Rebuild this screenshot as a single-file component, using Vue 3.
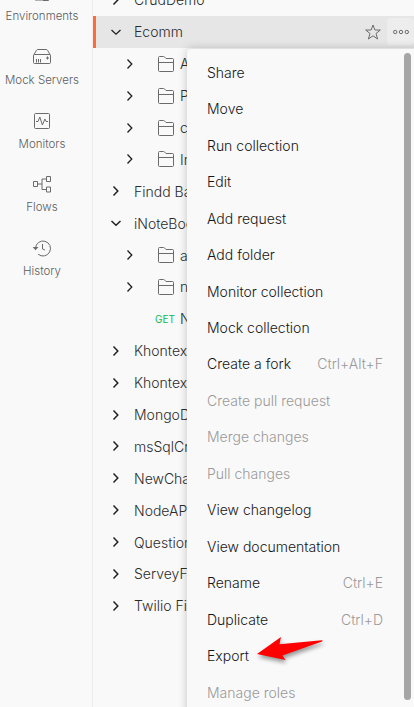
<script setup>
const nav = [
  { label: 'Environments', icon: 'env' },
  { label: 'Mock Servers', icon: 'mock' },
  { label: 'Monitors', icon: 'monitor' },
  { label: 'Flows', icon: 'flow' },
  { label: 'History', icon: 'history' },
]

const tree = [
  { label: 'CrudDemo' },
  { label: 'Ecomm', open: true, active: true },
  { label: 'A', folder: true },
  { label: 'P', folder: true },
  { label: 'c', folder: true },
  { label: 'In', folder: true },
  { label: 'Findd Ba' },
  { label: 'iNoteBoo', open: true },
  { label: 'a', folder: true },
  { label: 'n', folder: true },
  { label: 'N', request: true },
  { label: 'Khontex' },
  { label: 'Khontex' },
  { label: 'MongoD' },
  { label: 'msSqlCr' },
  { label: 'NewCha' },
  { label: 'NodeAP' },
  { label: 'Question' },
  { label: 'ServeyF' },
  { label: 'Twilio Fi' },
]

const menu = [
  { label: 'Share' },
  { label: 'Move' },
  { label: 'Run collection' },
  { label: 'Edit' },
  { label: 'Add request' },
  { label: 'Add folder' },
  { label: 'Monitor collection' },
  { label: 'Mock collection' },
  { label: 'Create a fork', keys: 'Ctrl+Alt+F' },
  { label: 'Create pull request', disabled: true },
  { label: 'Merge changes', disabled: true },
  { label: 'Pull changes', disabled: true },
  { label: 'View changelog' },
  { label: 'View documentation' },
  { label: 'Rename', keys: 'Ctrl+E' },
  { label: 'Duplicate', keys: 'Ctrl+D' },
  { label: 'Export', arrow: true },
  { label: 'Manage roles', disabled: true },
]
</script>

<template>
  <div class="app">
    <nav class="rail">
      <div v-for="n in nav" :key="n.label" class="rail-item">
        <svg class="rail-icon" width="20" height="20" viewBox="0 0 20 20">
          <path v-if="n.icon === 'env'" d="M3 2.500h8v14.500H3zM11 7.500h5.500V17.500H11" />
          <g v-else-if="n.icon === 'mock'">
            <path d="M1.500 8.500 4.500 3.200q.4-.7 1.200-.7h8.600q.8 0 1.200.7l3 5.300v7q0 1-1 1h-15q-1 0-1-1zM1.500 8.500q.3-1 1.200-1h14.600q.9 0 1.200 1" />
            <path d="M4.500 12v3.500M6.500 12v3.500M8.500 12v3.500M15.500 9.500v3M14 11h3" />
          </g>
          <g v-else-if="n.icon === 'monitor'">
            <rect x="2.500" y="2.500" width="15" height="15" rx="1" />
            <path d="M4 10.500h2L7.800 6l2.600 8 2.500-6 1.200 2.500H16" />
          </g>
          <g v-else-if="n.icon === 'flow'">
            <path d="M1.500 7.500h4v5h-4zM14.500 2.500h4v5h-4zM14.500 13h4v5h-4zM5.500 10H10M14.500 5H10v10.500h4.500" />
          </g>
          <g v-else>
            <path d="M3.500 10.300A7.500 7.500 0 1 1 6.100 16.200M10.500 6v5l2.500 1" />
            <path class="solid" d="M.7 9h5.800l-3 3.300z" />
          </g>
        </svg>
        <span>{{ n.label }}</span>
      </div>
    </nav>

    <main class="tree">
      <div
        v-for="(t, i) in tree"
        :key="i"
        class="row"
        :class="{ active: t.active, child: t.folder || t.request }"
      >
        <span v-if="t.request" class="method">GET</span>
        <svg v-else class="chevron" :class="{ bold: !t.active && !t.folder }" width="12" height="12" viewBox="0 0 12 12">
          <path v-if="t.open" d="M1.500 4 6 8.200 10.500 4" />
          <path v-else d="M3.500 1.500 7.800 6 3.500 10.500" />
        </svg>
        <svg v-if="t.folder" class="folder" width="18" height="18" viewBox="0 0 18 18">
          <path d="M1.500 15.500v-13q0-1 1-1h4q.8 0 1.200.6l1.300 1.400h6.500q1 0 1 1v11q0 1-1 1h-13q-1 0-1-1zM1.500 7.500h15" />
        </svg>
        <span class="name">{{ t.label }}</span>
        <div v-if="t.active" class="actions">
          <svg class="star" width="18" height="18" viewBox="0 0 18 18">
            <path d="m9 2 1.900 5h5.400l-4.300 3.500 1.600 5.500L9 12.800 4.400 16 6 10.500 1.700 7h5.400z" />
          </svg>
          <span class="more">
            <svg width="18" height="6" viewBox="0 0 18 6">
              <circle cx="3.200" cy="3" r="1.700" />
              <circle cx="9" cy="3" r="1.700" />
              <circle cx="14.800" cy="3" r="1.700" />
            </svg>
          </span>
        </div>
      </div>
    </main>

    <div class="menu">
      <div class="items">
        <div v-for="m in menu" :key="m.label" class="item" :class="{ disabled: m.disabled }">
          <span>{{ m.label }}</span>
          <span v-if="m.keys" class="keys">{{ m.keys }}</span>
          <svg v-if="m.arrow" class="arrow" width="78" height="38" viewBox="0 0 78 38">
            <path d="M5 23 29 6l-1.500 7.200L70 9.200q1.200.3 0 1.300L30.500 24.500l3 4.500z" />
          </svg>
        </div>
      </div>
      <div class="scrollbar"></div>
    </div>
  </div>
</template>

<style>
body {
  background: #f9f9f9;
  overflow: hidden;
}
</style>

<style scoped>
.app {
  position: relative;
  display: flex;
  width: 414px;
  height: 707px;
  overflow: hidden;
  background: #f9f9f9;
  color: #161616;
  font-family: Inter, "Liberation Sans", sans-serif;
  font-size: 14px;
  font-weight: 300;
}
svg {
  display: block;
  flex: none;
  fill: none;
  stroke: #6b6b6b;
}
.rail {
  flex: none;
  box-sizing: border-box;
  width: 93px;
  padding-right: 8px;
  border-right: 1px solid #ededed;
  margin-top: -17px;
  height: 724px;
}
.rail-item {
  display: flex;
  flex-direction: column;
  align-items: center;
  gap: 6px;
  height: 63.750px;
  color: #5c5c5c;
  font-size: 11.500px;
  line-height: 15px;
  white-space: nowrap;
}
.rail-icon {
  stroke-width: 1;
}
.solid {
  fill: #6b6b6b;
  stroke: none;
}
.tree {
  flex: 1;
  min-width: 0;
  margin-top: -16px;
}
.row {
  display: flex;
  align-items: center;
  box-sizing: border-box;
  height: 31.900px;
  padding-left: 17px;
  color: #2c2c2c;
  white-space: nowrap;
}
.row.active {
  padding-left: 14px;
  border-left: 3px solid #ff6c37;
  background: #e6e6e6;
}
.row.child {
  padding-left: 31px;
}
.chevron {
  margin-right: 12px;
  stroke: #212121;
  stroke-width: 1.300;
}
.chevron.bold {
  stroke-width: 1.500;
}
.child .chevron {
  margin-right: 21px;
}
.folder {
  margin-right: 5px;
}
.method {
  width: 25px;
  margin-left: 31px;
  color: #0cbb52;
  font-size: 10px;
  font-weight: 400;
}
.actions {
  display: flex;
  align-items: center;
  gap: 5px;
  margin-left: auto;
}
.more {
  display: flex;
  align-items: center;
  justify-content: center;
  width: 27px;
  height: 27px;
  border-radius: 4px;
  background: #ededed;
}
.menu {
  position: absolute;
  top: 49px;
  left: 187px;
  display: flex;
  box-sizing: border-box;
  width: 235px;
  height: 680px;
  padding: 4px 11px 29px 0;
  border-radius: 4px;
  background: #f9f9f9;
  box-shadow: 0 0 10px rgba(0, 0, 0, 0.22);
}
.items {
  flex: 1;
  padding: 1.500px 21px 0 20px;
}
.item {
  display: flex;
  align-items: center;
  height: 36.470px;
  line-height: 20px;
  white-space: nowrap;
}
.disabled,
.keys {
  color: #9a9a9a;
}
.keys {
  margin-left: auto;
}
.scrollbar {
  flex: none;
  width: 7px;
  border-radius: 4px;
  background: #a6a6a6;
}
.arrow {
  margin: -12px 0 0 3px;
  overflow: visible;
  filter: drop-shadow(1px 3px 2px rgba(0, 0, 0, 0.4));
}
.arrow path {
  fill: #ff0000;
  stroke: none;
}
</style>
